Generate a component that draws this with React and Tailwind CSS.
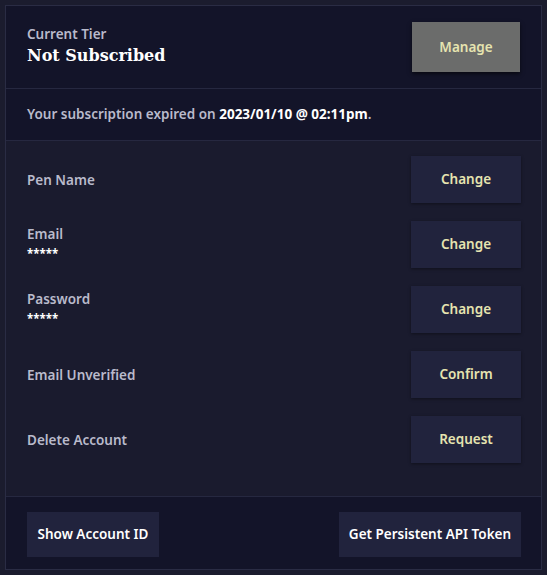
export default function App() {
  const rows = [
    { label: 'Pen Name', action: 'Change' },
    { label: 'Email', sub: '*****', action: 'Change' },
    { label: 'Password', sub: '*****', action: 'Change' },
    { label: 'Email Unverified', action: 'Confirm' },
    { label: 'Delete Account', action: 'Request' },
  ];

  return (
    <div className="w-[547px] h-[575px] bg-[#1b1c2e] p-[5px] font-['Noto_Sans',sans-serif]">
      <div className="h-full border border-[#2a2c44] flex flex-col">
        {/* Tier */}
        <div className="bg-[#131429] border-b border-[#262840] h-[83px] flex items-center justify-between pl-[21px] pr-[21px]">
          <div className="flex flex-col">
            <span className="text-[13.5px] font-semibold text-[#b9bacb] leading-[18px]">Current Tier</span>
            <span className="text-[16px] font-bold text-white font-['DejaVu_Serif',serif] leading-[26px]">Not Subscribed</span>
          </div>
          <button className="w-[108px] h-[50px] bg-[#6b6c6b] shadow-[0_2px_4px_rgba(0,0,0,0.6)] text-[13.5px] font-semibold text-[#e6e4b0]">
            Manage
          </button>
        </div>

        {/* Expiry */}
        <div className="bg-[#131429] border-b border-[#262840] h-[52px] flex items-center pl-[21px] text-[13.5px] font-semibold text-[#b9bacb]">
          <span>
            Your subscription expired on <span className="text-white font-bold">2023/01/10 @ 02:11pm</span>.
          </span>
        </div>

        {/* Settings */}
        <div className="bg-[#1a1b2e] flex-1 flex flex-col pt-[15px] pl-[21px] pr-[20px] gap-[18px] border-b border-[#262840]">
          {rows.map((r) => (
            <div key={r.label + r.action} className="flex items-center justify-between h-[47px]">
              <div className="flex flex-col">
                <span className="text-[13.5px] font-semibold text-[#b9bacb] leading-[18px]">{r.label}</span>
                {r.sub && <span className="text-[11.5px] font-bold text-white leading-[22px]">{r.sub}</span>}
              </div>
              <button className="w-[110px] h-[47px] bg-[#21233d] shadow-[0_1px_3px_rgba(0,0,0,0.4)] text-[13.5px] font-semibold text-[#e6e4b0]">
                {r.action}
              </button>
            </div>
          ))}
        </div>

        {/* Footer */}
        <div className="bg-[#131429] h-[72px] flex items-center justify-between pl-[21px] pr-[20px] pt-[2px]">
          <button className="w-[132px] h-[45px] bg-[#21233d] text-[13.5px] font-semibold text-white">
            Show Account ID
          </button>
          <button className="w-[182px] h-[45px] bg-[#21233d] text-[13.5px] font-semibold text-white">
            Get Persistent API Token
          </button>
        </div>
      </div>
    </div>
  );
}
